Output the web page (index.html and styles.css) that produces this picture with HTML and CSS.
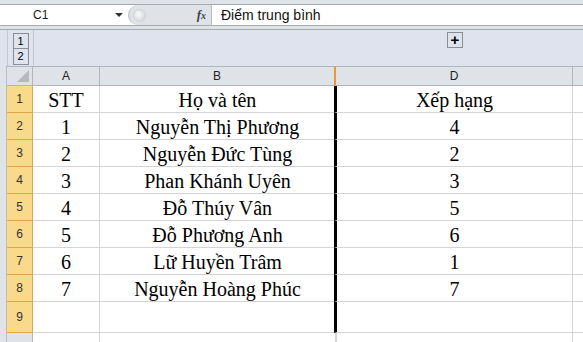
FILE: index.html
```html
<!DOCTYPE html>
<html lang="vi">
<head>
    <meta charset="UTF-8">
    <title>Xếp hạng</title>
    <link rel="stylesheet" href="styles.css">
</head>
<body>
    <div class="window">
        <div class="formula-bar">
            <div class="name-box">
                <span class="cell-ref">C1</span>
                <span class="arrow"></span>
            </div>
            <div class="splitter">
                <span class="knob"></span>
                <span class="fx">f<i>x</i></span>
            </div>
            <div class="formula">Điểm trung bình</div>
        </div>

        <div class="group-bar">
            <div class="gutter"></div>
            <div class="levels">
                <span class="level">1</span>
                <span class="level">2</span>
            </div>
            <div class="group-space">
                <span class="expand">+</span>
            </div>
        </div>

        <div class="sheet">
            <div class="gutter-cell"></div>
            <div class="corner"><span class="triangle"></span></div>
            <div class="col-head">A</div>
            <div class="col-head hidden-edge">B</div>
            <div class="col-head">D</div>
            <div class="col-head last"></div>
        </div>
        <div class="sheet" id="rows">
            <!-- rows are filled below -->
        </div>
    </div>

    <script>
        const data = [
            ['STT', 'Họ và tên', 'Xếp hạng'],
            ['1', 'Nguyễn Thị Phương', '4'],
            ['2', 'Nguyễn Đức Tùng', '2'],
            ['3', 'Phan Khánh Uyên', '3'],
            ['4', 'Đỗ Thúy Vân', '5'],
            ['5', 'Đỗ Phương Anh', '6'],
            ['6', 'Lữ Huyền Trâm', '1'],
            ['7', 'Nguyễn Hoàng Phúc', '7'],
            ['', '', ''],
            ['', '', '']
        ];

        const rows = document.getElementById('rows');
        data.forEach((row, i) => {
            const num = i + 1;
            let cls = 'row';
            if (num === 9) cls += ' tall';
            if (num === 10) cls += ' plain';
            // row 10 is only partly in view, its number falls below the edge
            const label = num < 10 ? num : '';
            rows.insertAdjacentHTML('beforeend', `
                <div class="gutter-cell ${cls}"></div>
                <div class="row-head ${cls}">${label}</div>
                <div class="cell ${cls}">${row[0]}</div>
                <div class="cell ${cls}">${row[1]}</div>
                <div class="cell sel ${cls}">${row[2]}</div>
                <div class="cell last ${cls}"></div>
            `);
        });
    </script>
</body>
</html>
```

FILE: styles.css
```css
body {
    margin: 0;
    background-color: #fff;
    font-family: "Liberation Sans", Arial, sans-serif;
}
.window {
    width: 583px;
    height: 342px;
    overflow: hidden;
    background-color: #dfe3e8;
}
.formula-bar {
    display: flex;
    margin-top: 4px;
    height: 20px;
    border-top: 1px solid #a6abb2;
    border-bottom: 1px solid #a6abb2;
    background-color: #fff;
}
.name-box {
    width: 128px;
    display: flex;
    align-items: center;
    font-size: 12px;
    color: #1a1a1a;
}
.cell-ref {
    margin-left: 33px;
    flex: 1;
}
.arrow {
    width: 0;
    height: 0;
    border-left: 4px solid transparent;
    border-right: 4px solid transparent;
    border-top: 4px solid #333;
    margin-right: 5px;
}
.splitter {
    width: 84px;
    display: flex;
    align-items: center;
    justify-content: space-between;
    background-color: #dfe3e8;
    border-left: 1px solid #b8bcc2;
    border-right: 1px solid #b8bcc2;
    border-radius: 10px 0 0 10px;
    padding: 0 5px 0 4px;
    box-sizing: border-box;
}
.knob {
    width: 11px;
    height: 11px;
    border-radius: 50%;
    background: radial-gradient(circle at 40% 40%, #fbfbfb, #c9cdd2);
    border: 1px solid #d0d4d8;
}
.fx {
    font-family: "Liberation Serif", "Times New Roman", serif;
    font-style: italic;
    font-weight: bold;
    font-size: 13px;
    color: #444;
}
.fx i {
    font-size: 10px;
}
.formula {
    flex: 1;
    padding-left: 9px;
    font-size: 14px;
    line-height: 20px;
    color: #111;
}
.group-bar {
    display: flex;
    margin-top: 3px;
    height: 36px;
    border-top: 1px solid #a6abb2;
    background-color: #dfe3ee;
}
.gutter {
    width: 7px;
    border-right: 1px solid #c3c7ce;
}
.levels {
    width: 25px;
    border-right: 1px solid #c3c7ce;
    display: flex;
    flex-direction: column;
    align-items: center;
    padding-top: 2px;
}
.level {
    width: 14px;
    height: 14px;
    border: 1px solid #8a8e94;
    margin-top: 1px;
    font-size: 11px;
    line-height: 14px;
    text-align: center;
    color: #000;
    background-color: #dfe3ee;
}
.level + .level {
    margin-top: 0;
    border-top: none;
    height: 15px;
}
.group-space {
    flex: 1;
    position: relative;
}
.expand {
    position: absolute;
    left: 413px;
    top: 2px;
    width: 14px;
    height: 14px;
    border: 1px solid #8a8e94;
    font-size: 15px;
    font-weight: bold;
    line-height: 13px;
    text-align: center;
    color: #000;
}
.sheet {
    display: grid;
    grid-template-columns: 7px 26px 67px 236px 237px 10px;
}
.gutter-cell {
    background-color: #dfe3e8;
    border-right: 1px solid #b9bec6;
}
.corner,
.col-head {
    height: 20px;
    box-sizing: border-box;
    background-color: #dfe3e8;
    border-top: 1px solid #b1b5bc;
    border-right: 1px solid #b1b5bc;
    border-bottom: 1px solid #b1b5bc;
    font-size: 12px;
    line-height: 19px;
    text-align: center;
    color: #222;
}
.corner {
    position: relative;
}
.triangle {
    position: absolute;
    right: 3px;
    bottom: 3px;
    width: 0;
    height: 0;
    border-left: 12px solid transparent;
    border-bottom: 12px solid #b6bac0;
}
.col-head.hidden-edge {
    border-right: 2px solid #e39a37;
}
.col-head.last {
    border-right: none;
}
.row {
    height: 27px;
    box-sizing: border-box;
}
.row.tall {
    height: 31px;
}
.row-head {
    background-color: #f9d98a;
    border-right: 1px solid #e2a646;
    border-bottom: 1px solid #e2a646;
    font-size: 12px;
    line-height: 27px;
    text-align: center;
    color: #333;
}
.row-head.tall {
    line-height: 31px;
}
.row-head.plain {
    background-color: #dfe3e8;
    border-right: 1px solid #b1b5bc;
    border-bottom: none;
}
.cell {
    background-color: #fff;
    border-right: 1px solid #d4d4d4;
    border-bottom: 1px solid #d4d4d4;
    font-family: "Liberation Serif", "Times New Roman", serif;
    font-size: 20px;
    line-height: 28px;
    text-align: center;
    color: #000;
}
.cell.sel {
    border-left: 3px solid #000;
    margin-left: -2px;
}
.cell.sel.plain {
    border-left: 1px solid #d4d4d4;
    margin-left: 0;
}
.cell.last {
    border-right: none;
}
```
